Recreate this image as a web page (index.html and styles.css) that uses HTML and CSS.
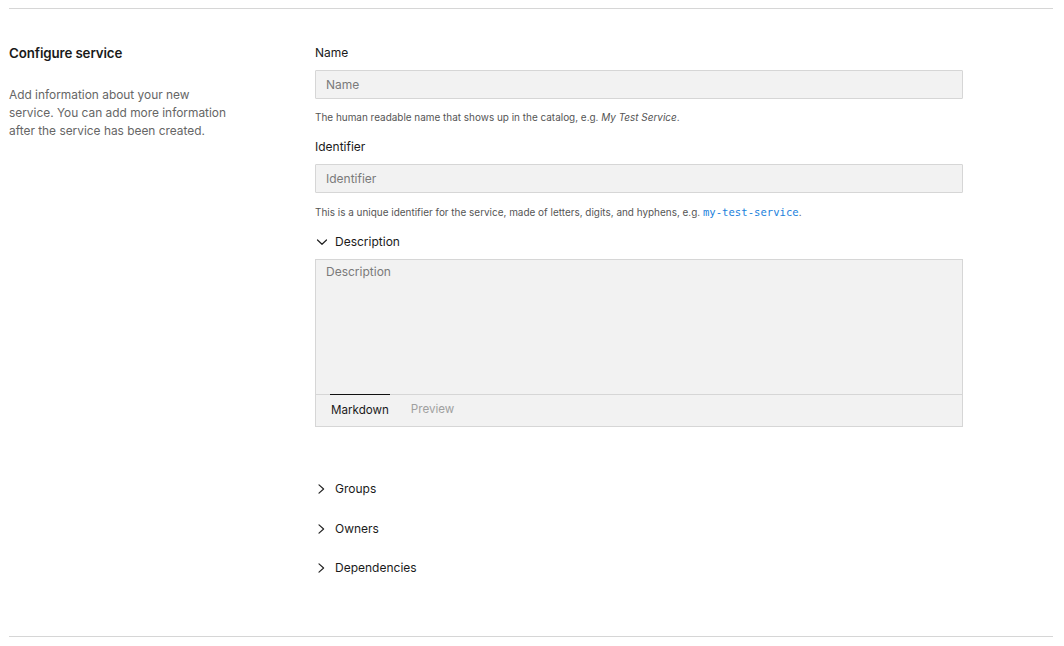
FILE: index.html
```html
<!DOCTYPE html>
<html lang="en">
<head>
<meta charset="utf-8">
<title>Configure service</title>
<link rel="stylesheet" href="styles.css">
</head>
<body>
<div class="page">
  <section class="section">
    <div class="intro">
      <h2 class="intro-title">Configure service</h2>
      <p class="intro-text">Add information about your new service. You can add more information after the service has been created.</p>
    </div>
    <div class="form">
      <div class="field">
        <label class="label">Name</label>
        <input class="input" type="text" placeholder="Name">
        <p class="help">The human readable name that shows up in the catalog, e.g. <em>My Test Service</em>.</p>
      </div>
      <div class="field">
        <label class="label">Identifier</label>
        <input class="input" type="text" placeholder="Identifier">
        <p class="help help-2">This is a unique identifier for the service, made of letters, digits, and hyphens, e.g. <code class="code">my-test-service</code>.</p>
      </div>
      <div class="toggle toggle-open">
        <svg class="chev" width="12" height="12" viewBox="0 0 12 12"><path d="M1.5 4 L6 8.3 L10.5 4" fill="none" stroke="#222" stroke-width="1.2" stroke-linecap="round" stroke-linejoin="round"/></svg>
        <span>Description</span>
      </div>
      <div class="editor">
        <textarea class="textarea" placeholder="Description"></textarea>
        <div class="tabs">
          <span class="tab tab-active">Markdown</span>
          <span class="tab">Preview</span>
        </div>
      </div>
      <div class="collapsibles">
        <div class="toggle row">
          <svg class="chev" width="12" height="12" viewBox="0 0 12 12"><path d="M3 1.9 L7.6 6 L3 10.1" fill="none" stroke="#222" stroke-width="1.2" stroke-linecap="round" stroke-linejoin="round"/></svg>
          <span>Groups</span>
        </div>
        <div class="toggle row">
          <svg class="chev" width="12" height="12" viewBox="0 0 12 12"><path d="M3 1.9 L7.6 6 L3 10.1" fill="none" stroke="#222" stroke-width="1.2" stroke-linecap="round" stroke-linejoin="round"/></svg>
          <span>Owners</span>
        </div>
        <div class="toggle row">
          <svg class="chev" width="12" height="12" viewBox="0 0 12 12"><path d="M3 1.9 L7.6 6 L3 10.1" fill="none" stroke="#222" stroke-width="1.2" stroke-linecap="round" stroke-linejoin="round"/></svg>
          <span>Dependencies</span>
        </div>
      </div>
    </div>
  </section>
</div>
</body>
</html>
```

FILE: styles.css
```css
* { box-sizing: border-box; }
html, body { margin: 0; padding: 0; background: #fff; }
body {
  font-family: Inter, "Noto Sans", "Liberation Sans", sans-serif;
  color: #1a1a1a;
  -webkit-font-smoothing: antialiased;
}
.page {
  padding: 8px 11px 0 9px;
}
.section {
  border-top: 1px solid #d6d6d6;
  border-bottom: 1px solid #d6d6d6;
  display: grid;
  grid-template-columns: 306px 648px;
  padding: 33px 0 48px 0;
  height: 629px;
}
.intro { padding-top: 1px; }
.intro-title {
  margin: 0;
  font-size: 13.3px;
  line-height: 20px;
  font-weight: 600;
  letter-spacing: -0.1px;
}
.intro-text {
  margin: 23px 0 0 0;
  width: 220px;
  font-size: 11.9px;
  line-height: 18px;
  color: #666;
}
.form {
  display: flex;
  flex-direction: column;
}
.field {
  display: flex;
  flex-direction: column;
}
.field + .field { margin-top: 11px; }
.label {
  font-size: 12px;
  line-height: 22px;
  color: #1a1a1a;
}
.input {
  margin-top: 6px;
  height: 29px;
  width: 100%;
  background: #f2f2f2;
  border: 1px solid #d6d6d6;
  border-radius: 1px;
  padding: 0 10px;
  font-family: inherit;
  font-size: 12px;
  color: #1a1a1a;
  outline: none;
}
.input::placeholder, .textarea::placeholder { color: #7a7a7a; }
.help {
  margin: 10px 0 0 0;
  font-size: 9.95px;
  line-height: 16px;
  color: #555;
}
.help-2 { margin-top: 11px; }
.help em { font-style: italic; }
.code {
  font-family: "DejaVu Sans Mono", "Liberation Mono", monospace;
  font-size: 10.6px;
  color: #1a7fdc;
}
.toggle {
  display: flex;
  align-items: center;
  gap: 7px;
  font-size: 12px;
  line-height: 20px;
  color: #1a1a1a;
}
.toggle-open { margin-top: 12px; }
.chev { flex: none; margin-left: 1px; }
.editor {
  margin-top: 7px;
  border: 1px solid #d6d6d6;
  background: #f2f2f2;
  display: flex;
  flex-direction: column;
  height: 168px;
}
.textarea {
  flex: 1;
  border: none;
  background: transparent;
  resize: none;
  padding: 4px 10px;
  font-family: inherit;
  font-size: 12px;
  line-height: 16px;
  color: #1a1a1a;
  outline: none;
}
.tabs {
  height: 32px;
  border-top: 1px solid #d6d6d6;
  display: flex;
  gap: 20px;
  padding-left: 14px;
}
.tab {
  font-size: 11.6px;
  line-height: 28px;
  color: #a0a0a0;
  padding: 0 1px;
}
.tab-active {
  color: #1a1a1a;
  border-top: 1px solid #111;
  margin-top: -1px;
  padding-top: 1px;
}
.collapsibles {
  margin-top: 52px;
  display: flex;
  flex-direction: column;
  gap: 19.5px;
}
.row { line-height: 20px; }
```
